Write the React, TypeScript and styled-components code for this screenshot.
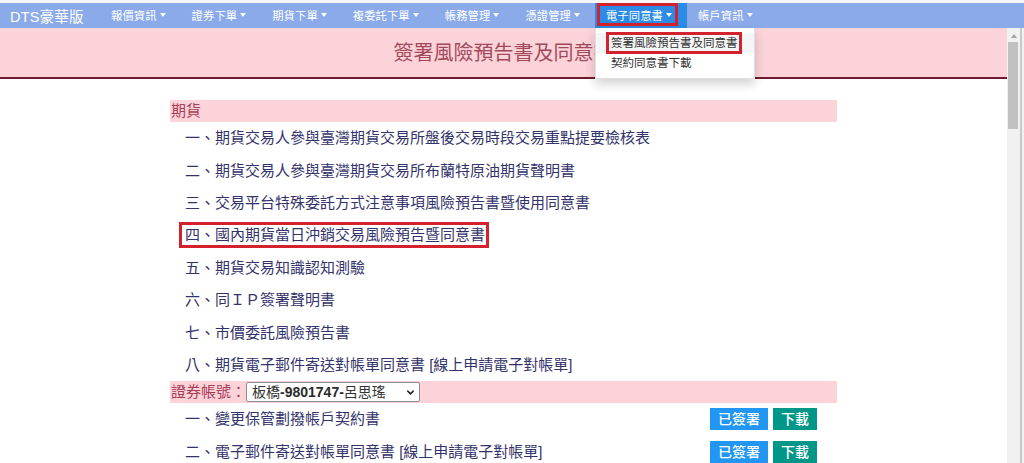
import React from "react";
import styled, { createGlobalStyle, css } from "styled-components";
import { ChevronDown } from "lucide-react";

const NAV_ITEMS = [
  "報價資訊",
  "證券下單",
  "期貨下單",
  "複委託下單",
  "帳務管理",
  "憑證管理",
  "電子同意書",
  "帳戶資訊",
];
const ACTIVE_NAV = "電子同意書";

const MENU_ITEMS = [
  { label: "簽署風險預告書及同意書", marked: true },
  { label: "契約同意書下載", marked: false },
];

const FUTURES_DOCS = [
  { title: "一、期貨交易人參與臺灣期貨交易所盤後交易時段交易重點提要檢核表" },
  { title: "二、期貨交易人參與臺灣期貨交易所布蘭特原油期貨聲明書" },
  { title: "三、交易平台特殊委託方式注意事項風險預告書暨使用同意書" },
  { title: "四、國內期貨當日沖銷交易風險預告暨同意書", marked: true },
  { title: "五、期貨交易知識認知測驗" },
  { title: "六、同ＩＰ簽署聲明書" },
  { title: "七、市價委託風險預告書" },
  { title: "八、期貨電子郵件寄送對帳單同意書 [線上申請電子對帳單]" },
];

const STOCK_DOCS = [
  { title: "一、變更保管劃撥帳戶契約書", signed: true },
  { title: "二、電子郵件寄送對帳單同意書 [線上申請電子對帳單]", signed: true },
];

const GlobalStyle = createGlobalStyle`
  html, body {
    margin: 0;
    padding: 0;
    background: #ffffff;
    overflow: hidden;
  }
  body {
    font-family: "Liberation Sans", "Noto Sans CJK TC", sans-serif;
  }
  * {
    box-sizing: border-box;
  }
`;

export default function App() {
  return (
    <>
      <GlobalStyle />
      <Page>
        <NavBar>
          <Brand>DTS豪華版</Brand>
          {NAV_ITEMS.map((label) => {
            const active = label === ACTIVE_NAV;
            return (
              <NavItem key={label} $active={active}>
                <NavLabel $marked={active}>
                  {label}
                  <Caret />
                </NavLabel>
                {active && (
                  <Dropdown>
                    {MENU_ITEMS.map((item) => (
                      <DropItem key={item.label} $hover={item.marked}>
                        <DropText $marked={item.marked}>{item.label}</DropText>
                      </DropItem>
                    ))}
                  </Dropdown>
                )}
              </NavItem>
            );
          })}
        </NavBar>

        <Frame>
          <Viewport>
            <Banner>
              <Title>簽署風險預告書及同意書</Title>
            </Banner>
            <Container>
              <SectionBand>期貨</SectionBand>
              {FUTURES_DOCS.map((doc) => (
                <DocRow key={doc.title}>
                  <DocTitle $marked={!!doc.marked}>{doc.title}</DocTitle>
                </DocRow>
              ))}

              <SectionBand $withControl>
                證券帳號：
                <AccountSelect>
                  板橋<Digits>-9801747-</Digits>呂思瑤
                  <ChevronDown size={11} strokeWidth={3.2} color="#222" />
                </AccountSelect>
              </SectionBand>
              {STOCK_DOCS.map((doc) => (
                <DocRow key={doc.title}>
                  <DocTitle $marked={false}>{doc.title}</DocTitle>
                  <Actions>
                    {doc.signed && <ActionButton $tone="blue">已簽署</ActionButton>}
                    <ActionButton $tone="teal">下載</ActionButton>
                  </Actions>
                </DocRow>
              ))}
            </Container>
          </Viewport>

          <ScrollRail>
            <ScrollArrow $dir="up" />
            <ScrollThumb />
          </ScrollRail>
        </Frame>
      </Page>
    </>
  );
}

const Page = styled.div`
  width: 1024px;
  height: 463px;
  padding-top: 3px;
  background: #f5f6f8;
  overflow: hidden;
`;

const NavBar = styled.nav`
  position: relative;
  z-index: 10;
  display: flex;
  align-items: stretch;
  height: 25px;
  background: #8aaae9;
  color: #ffffff;
`;

const Brand = styled.div`
  display: flex;
  align-items: center;
  width: 100px;
  padding-left: 10px;
  font-size: 14.5px;
  letter-spacing: 0.2px;
`;

const NavItem = styled.div<{ $active: boolean }>`
  position: relative;
  display: flex;
  align-items: flex-start;
  padding: 0 9px 0 2px;
  background: ${({ $active }) => ($active ? "#2b8be6" : "transparent")};
`;

const NavLabel = styled.span<{ $marked: boolean }>`
  display: inline-flex;
  align-items: center;
  gap: 3px;
  height: 23px;
  padding: 1px 3px 0 6px;
  border: 3px solid ${({ $marked }) => ($marked ? "#d3222e" : "transparent")};
  font-size: 11.3px;
  letter-spacing: 0.1px;
  white-space: nowrap;
`;

const Caret = styled.span`
  width: 0;
  height: 0;
  border-top: 4px solid #ffffff;
  border-left: 3.5px solid transparent;
  border-right: 3.5px solid transparent;
`;

const Dropdown = styled.div`
  position: absolute;
  top: 100%;
  left: 0;
  width: 160px;
  padding: 5px 0;
  background: #ffffff;
  border: 1px solid rgba(0, 0, 0, 0.12);
  border-top: none;
  box-shadow: 0 5px 10px rgba(0, 0, 0, 0.18);
`;

const DropItem = styled.div<{ $hover: boolean }>`
  display: flex;
  align-items: center;
  height: 20px;
  padding: 0 15px;
  background: ${({ $hover }) => ($hover ? "#f5f5f5" : "transparent")};
`;

const DropText = styled.span<{ $marked: boolean }>`
  font-size: 11.5px;
  color: #333333;
  white-space: nowrap;
  line-height: 16px;
  ${({ $marked }) =>
    $marked &&
    css`
      padding: 0 2px 0 2px;
      margin-left: -5px;
      border: 3px solid #d3222e;
    `}
`;

const Frame = styled.div`
  display: flex;
  height: 435px;
  background: #ffffff;
`;

const Viewport = styled.div`
  flex: 1;
  min-width: 0;
  overflow: hidden;
`;

const ScrollRail = styled.div`
  display: flex;
  flex-direction: column;
  align-items: flex-start;
  width: 17px;
  padding-left: 1px;
  background: linear-gradient(
    to right,
    #f1f1f1 0 13px,
    #c9c9c9 13px 15px,
    #f1f1f1 15px
  );
`;

const ScrollArrow = styled.div<{ $dir: "up" | "down" }>`
  width: 0;
  height: 0;
  margin: 6px 0 4px 3px;
  border-left: 3.5px solid transparent;
  border-right: 3.5px solid transparent;
  ${({ $dir }) =>
    $dir === "up"
      ? css`
          border-bottom: 4px solid #a3a3a3;
        `
      : css`
          border-top: 4px solid #a3a3a3;
        `}
`;

const ScrollThumb = styled.div`
  width: 10px;
  height: 87px;
  background: #c1c1c1;
`;

const Banner = styled.header`
  display: flex;
  align-items: center;
  justify-content: center;
  height: 51px;
  background: #fdd3da;
  border-bottom: 2px solid #6e1c2d;
`;

const Title = styled.h1`
  margin: 0;
  font-size: 20px;
  font-weight: normal;
  line-height: 1;
  color: #a24a5c;
  letter-spacing: 0;
`;

const Container = styled.main`
  width: 667px;
  margin: 21px auto 0;
`;

const SectionBand = styled.div<{ $withControl?: boolean }>`
  display: flex;
  align-items: center;
  min-height: 22px;
  padding: ${({ $withControl }) => ($withControl ? "1px 1px" : "0 1px")};
  background: #fdd3da;
  color: #a83d58;
  font-size: 15px;
  line-height: 20px;
`;

const AccountSelect = styled.div`
  display: inline-flex;
  align-items: center;
  width: 174px;
  height: 20px;
  padding: 0 3px 0 5px;
  background: #ffffff;
  border: 1px solid #8c8c8c;
  border-radius: 2px;
  color: #333333;
  font-size: 14px;
  line-height: 18px;

  svg {
    margin-left: auto;
  }
`;

const Digits = styled.b`
  color: #2a2a2a;
`;

const DocRow = styled.div`
  display: flex;
  align-items: center;
  height: 32.4px;
  padding: 0 20px 0 15px;
  font-size: 15px;
  color: #33336b;
`;

const DocTitle = styled.span<{ $marked: boolean }>`
  line-height: 20px;
  white-space: nowrap;
  ${({ $marked }) =>
    $marked &&
    css`
      margin-left: -6px;
      padding: 0 1px 0 3px;
      border: 3px solid #d3222e;
    `}
`;

const Actions = styled.div`
  display: flex;
  gap: 5px;
  margin-left: auto;
`;

const ActionButton = styled.button<{ $tone: "blue" | "teal" }>`
  height: 22px;
  padding: 0 8px;
  border: none;
  border-radius: 0;
  background: ${({ $tone }) => ($tone === "blue" ? "#2196f3" : "#009688")};
  color: #ffffff;
  font-family: "Liberation Sans", "Noto Sans CJK TC", sans-serif;
  font-size: 14px;
  font-weight: 500;
  line-height: 22px;
  cursor: pointer;
`;
